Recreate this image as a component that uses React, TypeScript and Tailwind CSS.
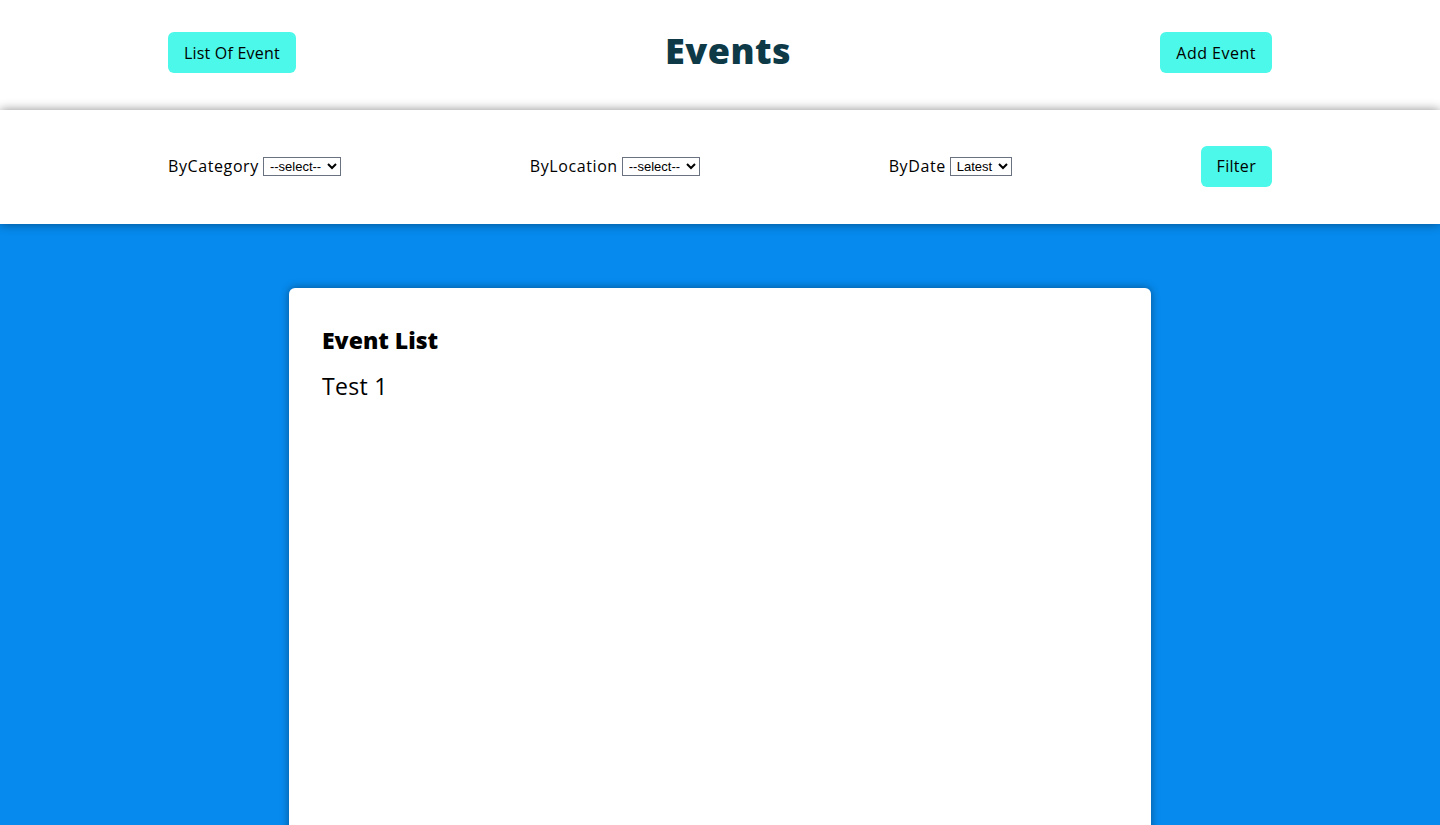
import React from 'react';

const font = { fontFamily: '"Open Sans", "Noto Sans", sans-serif' };
const selectFont = { fontFamily: '"Liberation Sans", Arial, sans-serif' };

const App: React.FC = () => {
  return (
    <div className="min-h-screen flex flex-col bg-[#068aee]" style={font}>
      <header className="bg-white h-[110px]">
        <div className="w-[1104px] mx-auto flex items-start justify-between pt-8">
          <button className="bg-[#4cf8e9] text-black text-base tracking-[0.2px] px-4 h-[41px] rounded-md">List Of Event</button>
          <h1 className="text-[36px] font-extrabold text-[#0e3a48] leading-none mt-[1px] tracking-[0.5px]">Events</h1>
          <button className="bg-[#4cf8e9] text-black text-base tracking-[0.5px] px-4 h-[41px] rounded-md">Add Event</button>
        </div>
      </header>

      <section className="bg-white h-[114px] relative z-10 shadow-[0_0_10px_rgba(0,0,0,0.45)]">
        <div className="w-[1104px] mx-auto h-full flex items-center justify-between -mt-[1px]">
          <div className="flex items-center gap-1 text-base text-black tracking-[0.6px]">
            <span>ByCategory</span>
            <select className="border border-gray-500 text-[13px] tracking-normal px-0.5 h-[19px] bg-white" style={selectFont}>
              <option>--select--</option>
            </select>
          </div>
          <div className="flex items-center gap-1 text-base text-black tracking-[0.6px]">
            <span>ByLocation</span>
            <select className="border border-gray-500 text-[13px] tracking-normal px-0.5 h-[19px] bg-white" style={selectFont}>
              <option>--select--</option>
            </select>
          </div>
          <div className="flex items-center gap-1 text-base text-black tracking-[0.6px]">
            <span>ByDate</span>
            <select className="border border-gray-500 text-[13px] tracking-normal px-0.5 h-[19px] bg-white" style={selectFont}>
              <option>Latest</option>
            </select>
          </div>
          <button className="bg-[#4cf8e9] text-black text-base tracking-[0.3px] px-4 h-[41px] rounded-md">Filter</button>
        </div>
      </section>

      <main className="flex-1 flex justify-center pt-16">
        <div className="w-[862px] bg-white rounded-md shadow-[0_0_8px_rgba(0,0,0,0.4)] px-[33px] pt-[38px] min-h-[560px]">
          <h2 className="text-[23px] font-extrabold text-black leading-tight">Event List</h2>
          <p className="text-[23px] text-black mt-[14px] tracking-[0.3px]">Test 1</p>
        </div>
      </main>
    </div>
  );
};

export default App;
